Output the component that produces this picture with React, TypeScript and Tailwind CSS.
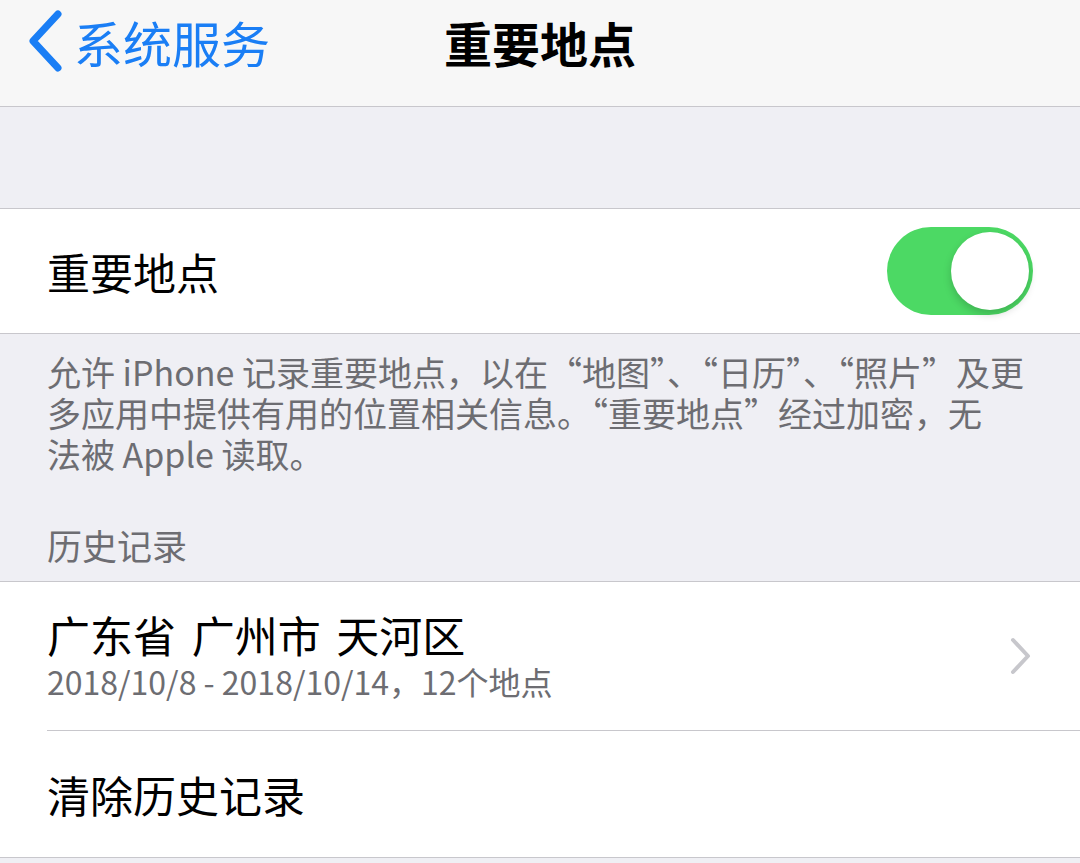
import React from "react";

const font = { fontFamily: '"Noto Sans CJK SC", "Noto Sans", sans-serif' };

export default function App() {
  return (
    <div className="w-[1080px] h-[863px] bg-[#efeff4] overflow-hidden" style={font}>
      {/* Nav bar */}
      <div className="relative h-[107px] bg-[#f7f7f7] border-b border-[#c8c7cc] flex items-center">
        <div className="flex items-center pl-[27px] pb-[24px]">
          <svg width="36" height="62" viewBox="0 0 36 62" className="mr-[11px]">
            <path d="M31 4 L6 31 L31 58" fill="none" stroke="#1a7ef5" strokeWidth="7" strokeLinecap="round" strokeLinejoin="round" />
          </svg>
          <span className="text-[49px] leading-none text-[#1a7ef5]">系统服务</span>
        </div>
        <div className="absolute left-0 right-0 top-0 h-[84px] flex items-center justify-center">
          <span className="text-[48px] leading-none font-semibold text-black">重要地点</span>
        </div>
      </div>

      <div className="h-[101px]" />

      {/* Toggle row */}
      <div className="bg-white border-y border-[#c8c7cc] h-[126px] flex items-center justify-between pl-[47px] pr-[47px]">
        <span className="text-[43px] leading-none text-black">重要地点</span>
        <div className="relative w-[146px] h-[88px] rounded-full bg-[#4cd964]">
          <div className="absolute right-[4px] top-[5px] w-[78px] h-[78px] rounded-full bg-white shadow-[0_4px_8px_rgba(0,0,0,0.18)]" />
        </div>
      </div>

      {/* Footer */}
      <div className="pl-[47px] pr-[20px] pt-[17px] text-[#6d6d72]">
        <div className="text-[34px] leading-[41px] whitespace-nowrap">
          <div>允许 iPhone 记录重要地点，以在“地图”、“日历”、“照片”及更</div>
          <div>多应用中提供有用的位置相关信息。“重要地点”经过加密，无</div>
          <div>法被 Apple 读取。</div>
        </div>
        <div className="text-[35px] leading-[41px] mt-[50px] mb-[16px]">历史记录</div>
      </div>

      {/* History section */}
      <div className="bg-white border-y border-[#c8c7cc]">
        <div className="h-[148px] flex items-center justify-between pl-[47px] pr-[48px]">
          <div className="flex flex-col">
            <span className="text-[43px] leading-[46px] text-black whitespace-pre [word-spacing:6px]">广东省 广州市 天河区</span>
            <span className="text-[32px] leading-[40px] text-[#6d6d72] mt-[4px]">2018/10/8 - 2018/10/14，12个地点</span>
          </div>
          <svg width="22" height="38" viewBox="0 0 22 38">
            <path d="M3 3 L18 19 L3 35" fill="none" stroke="#c7c7cc" strokeWidth="4" strokeLinecap="round" strokeLinejoin="round" />
          </svg>
        </div>
        <div className="ml-[47px] h-px bg-[#c8c7cc]" />
        <div className="h-[126px] flex items-center pl-[47px]">
          <span className="text-[43px] leading-none text-black">清除历史记录</span>
        </div>
      </div>
    </div>
  );
}
